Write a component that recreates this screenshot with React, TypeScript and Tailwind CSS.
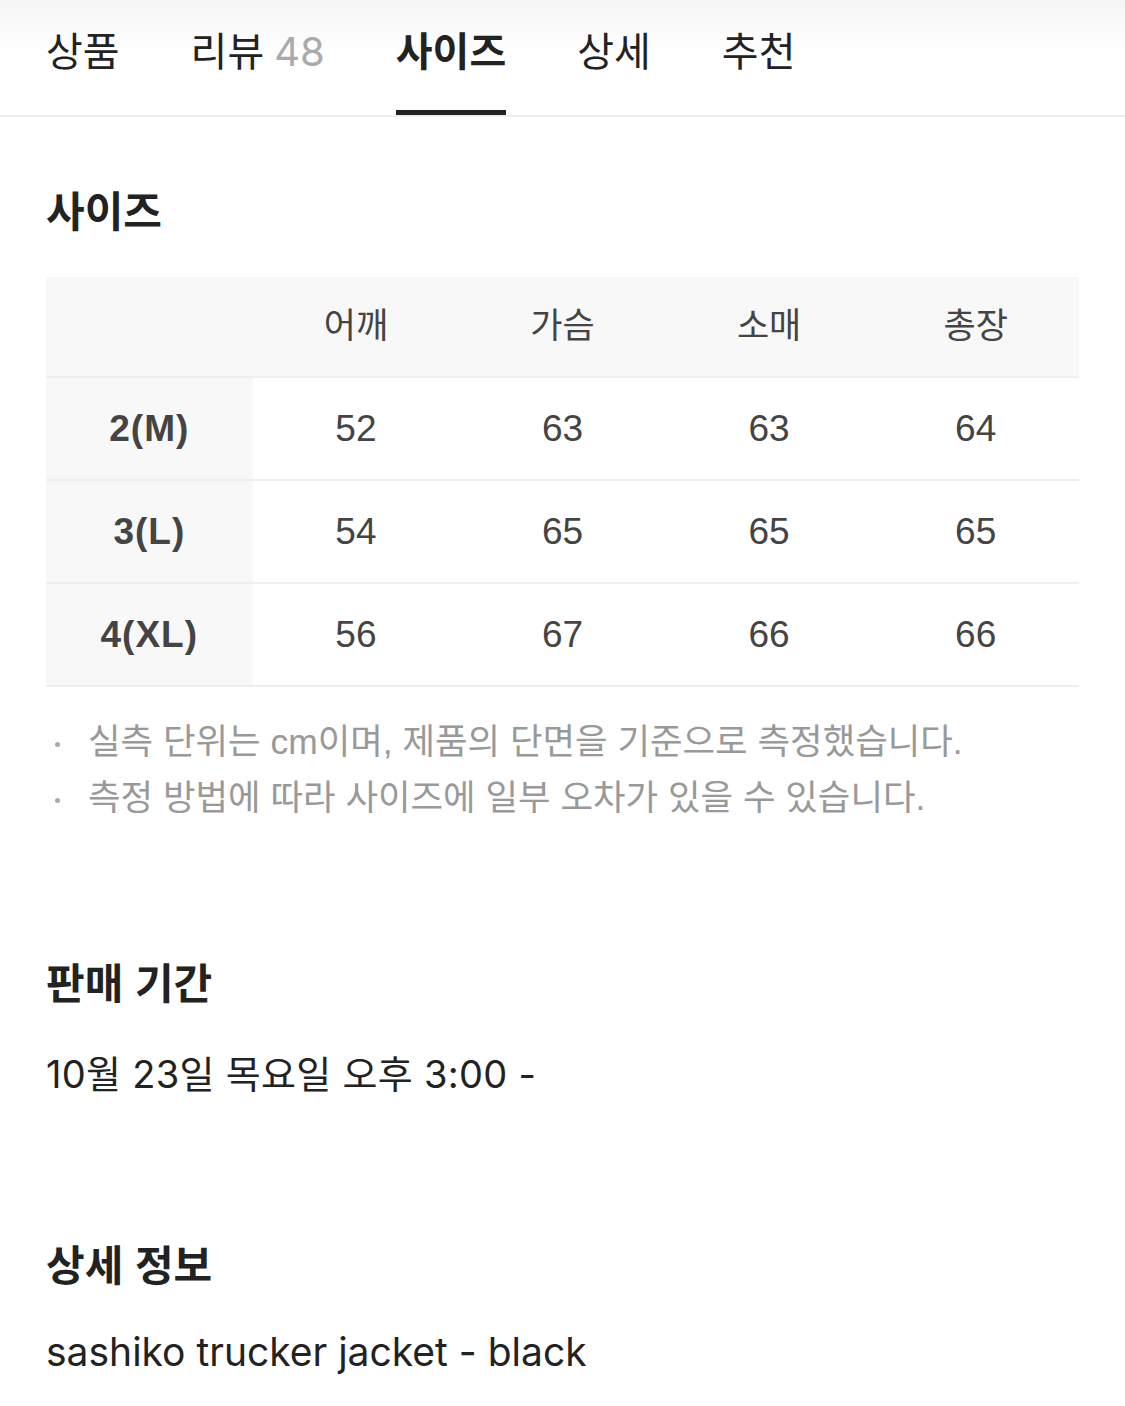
import React from "react";

const font = { fontFamily: '"Liberation Sans", "Noto Sans CJK KR", sans-serif' };
const wide = { fontFamily: 'Inter, "Noto Sans CJK KR", sans-serif' };

const tabs = [
  { label: "상품" },
  { label: "리뷰", count: "48" },
  { label: "사이즈", active: true },
  { label: "상세" },
  { label: "추천" },
];

const columns = ["어깨", "가슴", "소매", "총장"];

const rows = [
  { size: "2(M)", values: ["52", "63", "63", "64"] },
  { size: "3(L)", values: ["54", "65", "65", "65"] },
  { size: "4(XL)", values: ["56", "67", "66", "66"] },
];

const notes = [
  "실측 단위는 cm이며, 제품의 단면을 기준으로 측정했습니다.",
  "측정 방법에 따라 사이즈에 일부 오차가 있을 수 있습니다.",
];

function Tabs() {
  return (
    <nav className="flex h-[117px] gap-[71px] border-b-2 border-[#efefef] bg-gradient-to-b from-[#f6f6f6] via-white to-white px-[46px]">
      {tabs.map((t) => (
        <div
          key={t.label}
          className={`flex h-[115px] items-start pt-[28px] text-[40px] leading-[48px] ${
            t.active
              ? "border-b-[5px] border-[#222] font-bold text-[#222]"
              : "border-b-[5px] border-transparent text-[#222]"
          }`}
        >
          <span>{t.label}</span>
          {t.count && (
            <span className="ml-[10px] text-[#aaa]" style={wide}>
              {t.count}
            </span>
          )}
        </div>
      ))}
    </nav>
  );
}

function SizeTable() {
  return (
    <div className="mt-[36px]">
      <div className="grid h-[101px] grid-cols-5 items-center border-b-2 border-[#eeeeee] bg-[#f8f8f8] text-center text-[35px] text-[#444]">
        <div />
        {columns.map((c) => (
          <div key={c}>{c}</div>
        ))}
      </div>
      {rows.map((r) => (
        <div
          key={r.size}
          className="grid h-[103px] grid-cols-5 border-b-2 border-[#eeeeee] text-center text-[37px] text-[#444]"
        >
          <div className="flex items-center justify-center bg-[#f8f8f8] font-bold tracking-[1px]">
            {r.size}
          </div>
          {r.values.map((v, i) => (
            <div key={i} className="flex items-center justify-center">
              {v}
            </div>
          ))}
        </div>
      ))}
    </div>
  );
}

export default function App() {
  return (
    <div className="min-h-[1406px] w-[1125px] bg-white text-[#222]" style={font}>
      <Tabs />
      <section className="px-[46px]">
        <h2 className="mt-[68px] text-[42px] font-bold leading-[56px]">사이즈</h2>
        <SizeTable />
        <ul className="mt-[30px] flex flex-col gap-[6px] text-[35.4px] leading-[50px] text-[#999]">
          {notes.map((n) => (
            <li key={n} className="flex items-center">
              <span className="flex w-[42px] shrink-0 pl-[9px]">
                <span className="mt-[4px] h-[5px] w-[5px] rounded-full bg-[#aaa]" />
              </span>
              <span>{n}</span>
            </li>
          ))}
        </ul>
        <h2 className="mt-[134px] text-[42px] font-bold leading-[56px]">판매 기간</h2>
        <p className="mt-[36px] text-[38px] leading-[50px] tracking-[0.3px]" style={wide}>
          10월 23일 목요일 오후 3:00 -
        </p>
        <h2 className="mt-[140px] text-[42px] font-bold leading-[56px]">상세 정보</h2>
        <p className="mt-[32px] text-[39px] leading-[50px]" style={wide}>
          sashiko trucker jacket - black
        </p>
      </section>
    </div>
  );
}
